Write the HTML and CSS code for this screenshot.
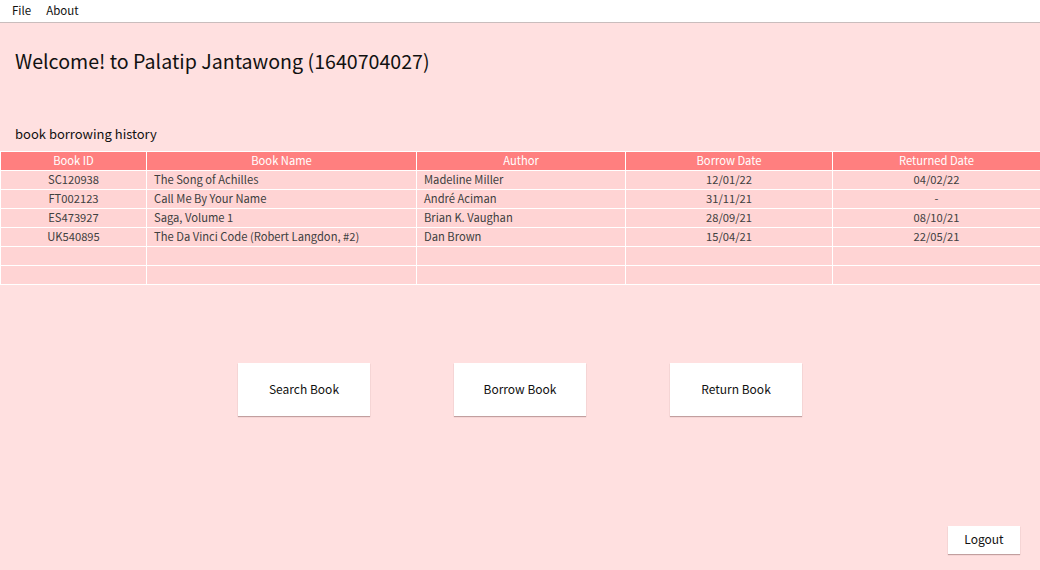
FILE: index.html
```html
<!DOCTYPE html>
<html>
<head>
<meta charset="utf-8">
<link rel="stylesheet" href="styles.css">
</head>
<body>
<div class="app">
  <nav class="menubar">
    <span class="menu-item">File</span>
    <span class="menu-item">About</span>
  </nav>
  <main class="content">
    <h1 class="welcome">Welcome! to Palatip Jantawong (1640704027)</h1>
    <h2 class="section-title">book borrowing history</h2>
    <table class="history">
      <colgroup>
        <col class="c1"><col class="c2"><col class="c3"><col class="c4"><col class="c5">
      </colgroup>
      <thead>
        <tr><th>Book ID</th><th>Book Name</th><th>Author</th><th>Borrow Date</th><th>Returned Date</th></tr>
      </thead>
      <tbody>
        <tr><td class="ctr">SC120938</td><td>The Song of Achilles</td><td>Madeline Miller</td><td class="ctr">12/01/22</td><td class="ctr">04/02/22</td></tr>
        <tr><td class="ctr">FT002123</td><td>Call Me By Your Name</td><td>André Aciman</td><td class="ctr">31/11/21</td><td class="ctr">-</td></tr>
        <tr><td class="ctr">ES473927</td><td>Saga, Volume 1</td><td>Brian K. Vaughan</td><td class="ctr">28/09/21</td><td class="ctr">08/10/21</td></tr>
        <tr><td class="ctr">UK540895</td><td>The Da Vinci Code (Robert Langdon, #2)</td><td>Dan Brown</td><td class="ctr">15/04/21</td><td class="ctr">22/05/21</td></tr>
        <tr><td></td><td></td><td></td><td></td><td></td></tr>
        <tr><td></td><td></td><td></td><td></td><td></td></tr>
      </tbody>
    </table>
    <div class="actions">
      <button class="btn big">Search Book</button>
      <button class="btn big">Borrow Book</button>
      <button class="btn big">Return Book</button>
    </div>
    <div class="footer">
      <button class="btn small">Logout</button>
    </div>
  </main>
</div>
</body>
</html>
```
FILE: styles.css
```css
* { box-sizing: border-box; }
html, body { margin: 0; padding: 0; }
body {
  width: 1040px;
  height: 570px;
  overflow: hidden;
  background: #ffe0e0;
  font-family: "Noto Sans CJK KR", "Noto Sans", sans-serif;
  color: #111;
}
.app { display: flex; flex-direction: column; height: 570px; }
.menubar {
  height: 23px;
  background: #fff;
  border-bottom: 1px solid #c9bdbd;
  display: flex;
  align-items: center;
  padding-left: 12px;
  padding-bottom: 2px;
  gap: 15px;
  font-size: 11.5px;
  line-height: 20px;
}
.content { flex: 1; display: flex; flex-direction: column; }
.welcome {
  margin: 24px 0 0 15px;
  font-size: 19.6px;
  font-weight: normal;
  line-height: 28px;
  height: 28px;
}
.section-title {
  margin: 50px 0 0 15px;
  font-size: 13px;
  font-weight: normal;
  line-height: 18px;
}
.history {
  margin-top: 8px;
  width: 1040px;
  table-layout: fixed;
  border-collapse: separate;
  border-spacing: 1px;
  background: #fff;
  font-size: 11.2px;
}
.c1 { width: 145px; }
.c2 { width: 269px; }
.c3 { width: 208px; }
.c4 { width: 206px; }
.c5 { width: 207px; }
.history th {
  background: #ff7f7f;
  color: #fff;
  font-weight: normal;
  height: 18px;
  padding: 0 0 2px 0;
  line-height: 16px;
}
.history td {
  background: #ffd4d4;
  color: #404040;
  height: 18px;
  padding: 0 0 2px 7px;
  line-height: 16px;
  white-space: nowrap;
}
.history td.ctr { text-align: center; padding: 0 0 2px 0; }
.actions {
  display: flex;
  justify-content: center;
  gap: 84px;
  margin-top: 78px;
}
.btn {
  background: #fff;
  border: none;
  font-family: inherit;
  color: #111;
  box-shadow: 0 1px 1px rgba(120, 80, 80, 0.45);
  padding: 0 0 3px 0;
}
.btn.big { width: 132px; height: 53px; font-size: 12px; }
.footer {
  margin-top: auto;
  display: flex;
  justify-content: flex-end;
  padding: 0 20px 16px 0;
}
.btn.small { width: 72px; height: 28px; font-size: 12px; }
```
